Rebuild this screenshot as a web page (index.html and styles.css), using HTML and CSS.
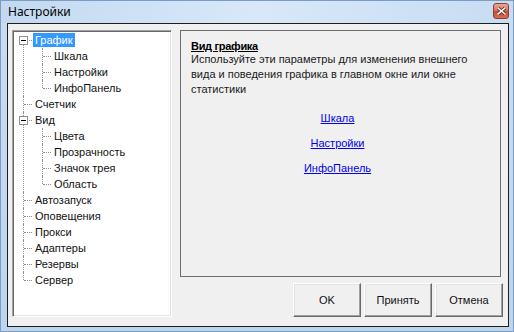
FILE: index.html
```html
<!DOCTYPE html>
<html lang="ru">
<head>
  <meta charset="UTF-8">
  <title>Настройки</title>
  <link rel="stylesheet" href="styles.css">
</head>
<body>
  <div class="window">
    <div class="titlebar">
      <span class="title">Настройки</span>
      <span class="close-btn">
        <svg width="9" height="8" viewBox="0 0 9 8">
          <path d="M1 1 L8 7 M8 1 L1 7" stroke="#6b2418" stroke-width="3.2" stroke-linecap="square"/>
          <path d="M1 1 L8 7 M8 1 L1 7" stroke="#fff" stroke-width="1.6" stroke-linecap="square"/>
        </svg>
      </span>
    </div>
    <div class="client">
      <div class="tree-box">
        <ul class="tree">
          <li class="open">
            <span class="toggle"></span>
            <span class="label selected">График</span>
            <ul>
              <li><span class="label">Шкала</span></li>
              <li><span class="label">Настройки</span></li>
              <li><span class="label">ИнфоПанель</span></li>
            </ul>
          </li>
          <li><span class="label">Счетчик</span></li>
          <li class="open">
            <span class="toggle"></span>
            <span class="label">Вид</span>
            <ul>
              <li><span class="label">Цвета</span></li>
              <li><span class="label">Прозрачность</span></li>
              <li><span class="label">Значок трея</span></li>
              <li><span class="label">Область</span></li>
            </ul>
          </li>
          <li><span class="label">Автозапуск</span></li>
          <li><span class="label">Оповещения</span></li>
          <li><span class="label">Прокси</span></li>
          <li><span class="label">Адаптеры</span></li>
          <li><span class="label">Резервы</span></li>
          <li><span class="label">Сервер</span></li>
        </ul>
      </div>
      <div class="right-side">
        <div class="panel">
          <div class="panel-title">Вид графика</div>
          <div class="panel-text">Используйте эти параметры для изменения внешнего вида и поведения графика в главном окне или окне статистики</div>
          <div class="links">
            <a href="#">Шкала</a>
            <a href="#">Настройки</a>
            <a href="#">ИнфоПанель</a>
          </div>
        </div>
        <div class="buttons">
          <button>OK</button>
          <button>Принять</button>
          <button>Отмена</button>
        </div>
      </div>
    </div>
  </div>
</body>
</html>
```

FILE: styles.css
```css
body {
  margin: 0;
  font-family: "Liberation Sans", Arial, sans-serif;
  font-size: 11px;
  color: #000;
  background: #fff;
}
.window {
  width: 514px;
  height: 332px;
  box-sizing: border-box;
  border: 1px solid #7d9cc4;
  background: linear-gradient(to bottom, #c9ddf3, #bcd5ef);
  display: flex;
  flex-direction: column;
}
.titlebar {
  height: 23px;
  display: flex;
  align-items: center;
  justify-content: space-between;
  padding: 0 4px 0 7px;
  background: linear-gradient(to right, #c3d9f1, #d8e8f8 50%, #c8dcf2);
}
.title {
  font-family: "Noto Sans", "Open Sans", sans-serif;
  font-size: 12px;
  color: #000;
  margin-top: -1px;
}
.close-btn {
  width: 14px;
  height: 14px;
  margin-top: -2px;
  border: 1px solid #8e3f31;
  border-radius: 3px;
  background: linear-gradient(to bottom, #eaa898, #d57460 45%, #c44c34 55%, #d86e52);
  display: flex;
  align-items: center;
  justify-content: center;
}
.client {
  flex: 1;
  margin: 0 4px 4px 6px;
  border: 1px solid #1e1e1e;
  background: #f0f0f0;
  display: flex;
  gap: 8px;
  padding: 6px 5px 9px 4px;
}
.tree-box {
  width: 160px;
  box-sizing: border-box;
  background: #fff;
  border-top: 1px solid #a0a0a0;
  border-left: 1px solid #a0a0a0;
  border-right: 1px solid #fff;
  border-bottom: 1px solid #fff;
  box-shadow: inset 1px 1px #696969, inset -1px -1px #e3e3e3;
  padding: 1px 1px;
  overflow: hidden;
}
.tree, .tree ul {
  list-style: none;
  margin: 0;
  padding: 0;
}
.tree li {
  position: relative;
  padding-left: 19px;
  line-height: 16px;
  white-space: nowrap;
  color: #111;
}
.tree li::before {
  content: "";
  position: absolute;
  left: 10px;
  top: 8px;
  width: 8px;
  border-top: 1px dotted #8e8e8e;
}
.tree li::after {
  content: "";
  position: absolute;
  left: 9px;
  top: 0;
  bottom: 0;
  border-left: 1px dotted #8e8e8e;
}
.tree > li:first-child::after {
  top: 8px;
}
.tree li:last-child::after {
  bottom: auto;
  height: 8px;
}
.label {
  display: inline-block;
  padding: 0 2px;
  line-height: 14px;
  margin: 1px 0;
}
.label.selected {
  background: #3399ff;
  color: #fff;
}
.toggle {
  position: absolute;
  left: 5px;
  top: 4px;
  width: 7px;
  height: 7px;
  border: 1px solid #919191;
  background: #fff;
  z-index: 1;
}
.toggle::before {
  content: "";
  position: absolute;
  left: 1px;
  top: 3px;
  width: 5px;
  height: 1px;
  background: #000;
}
.right-side {
  width: 323px;
  display: flex;
  flex-direction: column;
}
.panel {
  width: 321px;
  height: 247px;
  box-sizing: border-box;
  border: 1px solid #6d6d6d;
  padding: 9px 10px 0 10px;
}
.panel-title {
  font-weight: bold;
  text-decoration: underline;
  line-height: 13px;
  letter-spacing: -0.3px;
}
.panel-text {
  line-height: 15px;
  margin-top: -1px;
  color: #1a1a1a;
}
.links {
  display: flex;
  flex-direction: column;
  align-items: center;
  gap: 10px;
  margin-top: 14px;
  padding-right: 6px;
  line-height: 15px;
}
.links a {
  color: #0000ee;
  text-decoration: underline;
}
.buttons {
  display: flex;
  justify-content: flex-end;
  gap: 3px;
  margin-top: 6px;
}
.buttons button {
  width: 68px;
  height: 34px;
  font-family: "Liberation Sans", Arial, sans-serif;
  font-size: 11px;
  color: #111;
  background: #f0f0f0;
  border: 1px solid;
  border-color: #fff #696969 #696969 #fff;
  box-shadow: inset -1px -1px #a0a0a0, inset 1px 1px #e3e3e3;
  padding: 0;
}
```
